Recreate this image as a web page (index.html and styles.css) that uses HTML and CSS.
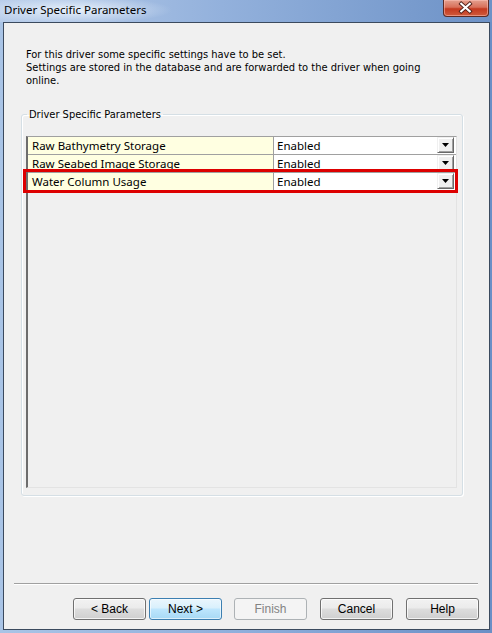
FILE: index.html
```html
<!DOCTYPE html>
<html>
<head>
<meta charset="utf-8">
<link rel="stylesheet" href="styles.css">
</head>
<body>
<div class="window">
  <div class="titlebar">
    <span class="title">Driver Specific Parameters</span>
    <div class="close">
      <svg width="46" height="17" viewBox="0 0 46 17">
        <path d="M18 3.5 L27 11.5 M27 3.5 L18 11.5" stroke="#4a1c16" stroke-width="4" stroke-linecap="square"/>
        <path d="M18 3.5 L27 11.5 M27 3.5 L18 11.5" stroke="#ffffff" stroke-width="2.2" stroke-linecap="square"/>
      </svg>
    </div>
  </div>
  <div class="client">
    <p class="intro">For this driver some specific settings have to be set.<br>Settings are stored in the database and are forwarded to the driver when going<br>online.</p>
    <fieldset class="group">
      <legend>Driver Specific Parameters</legend>
      <div class="grid">
        <div class="row">
          <div class="name">Raw Bathymetry Storage</div>
          <div class="value"><span>Enabled</span><span class="drop"><svg width="7" height="4" viewBox="0 0 7 4"><polygon points="0,0 7,0 3.5,4" fill="#000"/></svg></span></div>
        </div>
        <div class="row">
          <div class="name">Raw Seabed Image Storage</div>
          <div class="value"><span>Enabled</span><span class="drop"><svg width="7" height="4" viewBox="0 0 7 4"><polygon points="0,0 7,0 3.5,4" fill="#000"/></svg></span></div>
        </div>
        <div class="row selected">
          <div class="name">Water Column Usage</div>
          <div class="value"><span>Enabled</span><span class="drop"><svg width="7" height="4" viewBox="0 0 7 4"><polygon points="0,0 7,0 3.5,4" fill="#000"/></svg></span></div>
          <div class="highlight"></div>
        </div>
      </div>
    </fieldset>
    <div class="spacer"></div>
    <div class="separator"></div>
    <div class="buttons">
      <button class="btn">&lt; Back</button>
      <button class="btn default">Next &gt;</button>
      <button class="btn disabled">Finish</button>
      <button class="btn">Cancel</button>
      <button class="btn">Help</button>
    </div>
  </div>
</div>
</body>
</html>
```
FILE: styles.css
```css
html, body {
  margin: 0;
  padding: 0;
}
body {
  width: 492px;
  height: 633px;
  overflow: hidden;
  font-family: "Liberation Sans", Arial, sans-serif;
}
.window {
  height: 633px;
  display: flex;
  flex-direction: column;
  background: linear-gradient(to right, #a9c4e6 0%, #8eaedb 50%, #6a8fc6 100%);
}
.titlebar {
  height: 22px;
  flex: none;
  display: flex;
  justify-content: space-between;
  align-items: flex-start;
  background:
    radial-gradient(ellipse 100px 14px at 72px 10px, rgba(235,243,252,0.95), rgba(235,243,252,0)),
    linear-gradient(to right, #b8cdea 0%, #93b1dc 45%, #6d92c7 100%);
}
.title {
  padding-left: 4px;
  line-height: 20px;
  font-family: "Noto Sans", "Liberation Sans", sans-serif;
  font-size: 11.5px;
  color: #000;
}
.close {
  width: 46px;
  height: 17px;
  margin-right: 3px;
  box-sizing: border-box;
  border: 1px solid #5b2a25;
  border-top: none;
  border-radius: 0 0 4px 4px;
  background: linear-gradient(#e4a08f 0%, #d8705a 45%, #c4391f 55%, #cf5a3c 100%);
  box-shadow: inset 0 0 0 1px rgba(255,200,190,0.5);
  display: flex;
}
.client {
  flex: 1;
  margin: 0 2px 3px 3px;
  border: 1px solid #3b4a5e;
  background: #f0f0f0;
  display: flex;
  flex-direction: column;
}
.intro {
  margin: 0;
  padding: 25px 0 0 22px;
  font-family: "DejaVu Sans Condensed", "Liberation Sans", sans-serif;
  font-size: 11px;
  line-height: 13px;
  color: #000;
}
.group {
  margin: 21px 0 0 17px;
  width: 442px;
  box-sizing: border-box;
  padding: 15px 5px 7px 4px;
  border: 1px solid #d5dfe5;
  border-radius: 3px;
  box-shadow: 1px 1px 0 #ffffff, inset 1px 1px 0 #ffffff;
  min-width: 0;
}
.group legend {
  padding: 0 2px;
  margin-left: 1px;
  font-family: "DejaVu Sans Condensed", "Liberation Sans", sans-serif;
  font-size: 11px;
  line-height: 13px;
  color: #000;
}
.grid {
  height: 352px;
  box-sizing: border-box;
  border: 1px solid;
  border-color: #a0a0a0 #e3e3e3 #e3e3e3 #a0a0a0;
  border-left: 2px solid #6d6d6d;
  background: #f0f0f0;
}
.row {
  display: flex;
  height: 18px;
  box-sizing: border-box;
  border-bottom: 1px solid #a0a0a0;
  font-family: "Noto Sans", "Liberation Sans", sans-serif;
  font-size: 11.5px;
  line-height: 17px;
  color: #000;
}
.row.selected {
  position: relative;
}
.name {
  width: 245px;
  flex: none;
  background: #ffffe1;
  border-right: 1px solid #a0a0a0;
  padding-left: 4px;
  box-sizing: border-box;
  width: 246px;
  white-space: nowrap;
  overflow: hidden;
}
.value {
  flex: 1;
  background: #ffffff;
  display: flex;
  justify-content: space-between;
  padding-left: 3px;
  padding-right: 2px;
}
.drop {
  width: 17px;
  height: 16px;
  margin-top: 0;
  box-sizing: border-box;
  border: 1px solid;
  border-color: #f0f0f0 #696969 #696969 #f0f0f0;
  box-shadow: inset 1px 1px 0 #ffffff, inset -1px -1px 0 #a0a0a0;
  background: #f0f0f0;
  display: flex;
  align-items: center;
  justify-content: center;
}
.drop svg {
  display: block;
}
.highlight {
  position: absolute;
  left: -5px;
  right: -2px;
  top: -4px;
  bottom: -3px;
  border: 3px solid #dd0000;
  pointer-events: none;
}
.spacer {
  flex: 1;
}
.separator {
  margin: 0 11px 0 10px;
  height: 1px;
  background: #a0a0a0;
  border-bottom: 1px solid #ffffff;
}
.buttons {
  display: flex;
  justify-content: flex-end;
  padding: 13px 10px 9px 0;
}
.btn {
  width: 73px;
  height: 22px;
  box-sizing: border-box;
  margin: 0 0 0 13px;
  padding: 0;
  border: 1px solid #707070;
  border-radius: 3px;
  background: linear-gradient(#f2f2f2 0%, #ebebeb 45%, #dddddd 50%, #cfcfcf 100%);
  box-shadow: inset 0 0 0 1px rgba(255,255,255,0.75);
  font-family: "Liberation Sans", Arial, sans-serif;
  font-size: 12px;
  color: #000;
}
.btn.default {
  margin-left: 3px;
  border-color: #3c7fb1;
  background: linear-gradient(#eaf6fd 0%, #d9f0fc 45%, #bee6fd 50%, #a7d9f5 100%);
  box-shadow: inset 0 0 0 1px rgba(255,255,255,0.6);
}
.btn.disabled {
  margin-left: 12px;
  border-color: #adb2b5;
  background: #f4f4f4;
  color: #838383;
  box-shadow: none;
}
```
